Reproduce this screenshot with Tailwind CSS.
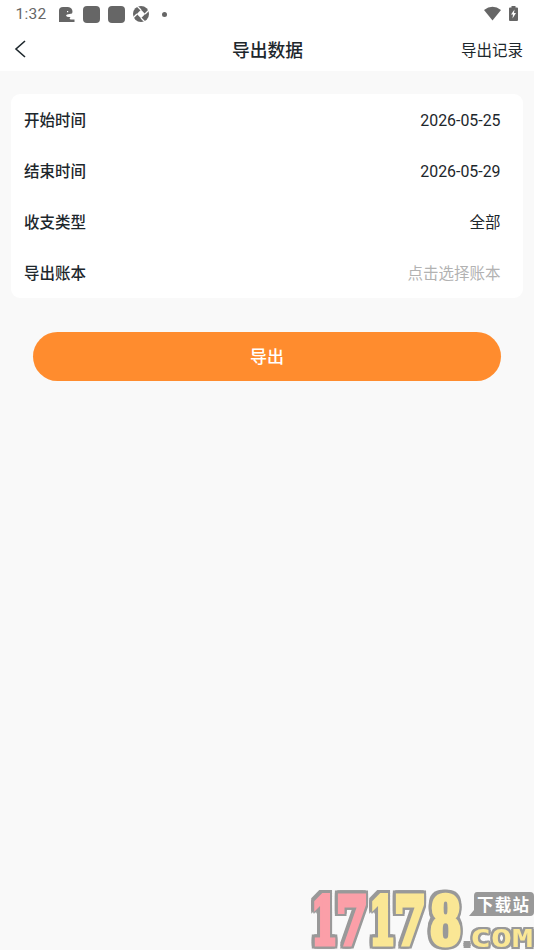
<!DOCTYPE html>
<html lang="zh-CN">
<head>
<meta charset="utf-8">
<title>导出数据</title>
<script src="https://cdn.jsdelivr.net/npm/@tailwindcss/browser@4"></script>
</head>
<body class="relative flex h-[950px] w-[534px] flex-col overflow-hidden bg-[#f9f9f9] font-['Roboto','Noto_Sans_CJK_SC',sans-serif] text-[#1d272c]">
  <header class="h-[71px] bg-white">
    <div class="flex h-7 items-center justify-between pr-[16px] pl-[15.5px] text-[#666]">
      <div class="flex items-center">
        <span class="w-[42px] text-[15.5px] leading-7 tracking-[0.3px]">1:32</span>
        <svg class="h-4 w-[17px]" viewBox="0 0 17 16" fill="currentColor"><path d="M1 16V4.500Q1 1 5 1H10Q14.500 1.500 14.500 6L14 7.500L9 8.500L8 9.500Q8.500 11 11 11H12.500L11.500 12.500L12.500 13.500H16.500V16ZM9 5V6.200H10.200V5Z" fill-rule="evenodd"/></svg>
        <span class="ml-2 size-[17px] rounded-[4px] bg-current"></span>
        <span class="ml-[8px] size-[17px] rounded-[4px] bg-current"></span>
        <svg class="ml-[8px] size-4" viewBox="0 0 16 16"><circle cx="8" cy="8" r="8" fill="#666"/><path d="M8 3.800L12.200 8L8 12.200L3.800 8Z" fill="#fff"/><path d="M8 4L4 0M12 8L16 4M8 12L12 16M4 8L0 12" stroke="#fff" stroke-width="1.300"/></svg>
        <span class="ml-[13.500px] size-[5px] rounded-full bg-current"></span>
      </div>
      <div class="flex -translate-y-px items-center gap-[8px]">
        <svg class="h-[15px] w-[17px]" viewBox="0 0 17 15" fill="currentColor"><path d="M0 4Q8.500-2.500 17 4L8.500 14.500Z"/></svg>
        <svg class="h-[15px] w-[9px]" viewBox="0 0 9 15"><path d="M2.500 0H6.500V1.500H8Q9 1.500 9 2.500V14Q9 15 8 15H1Q0 15 0 14V2.500Q0 1.500 1 1.500H2.500Z" fill="#666"/><path d="M5.500 3.500L2 8.500H4L3.500 12.500L7 7H5Z" fill="#fff"/></svg>
      </div>
    </div>
    <div class="flex h-[43px] items-center pr-[11px] pl-[14px]">
      <svg class="mb-px h-[18px] w-3" viewBox="0 0 12 18" fill="none" stroke="#1d272c" stroke-width="1.600"><path d="M11 1L2 9L11 17"/></svg>
      <h1 class="ml-[206px] pt-[2px] text-[17.800px] leading-[41px] font-medium">导出数据</h1>
      <a class="ml-auto pt-[3px] text-[15.500px] leading-[40px]">导出记录</a>
    </div>
  </header>
  <main>
    <section class="mx-[11px] mt-[23px] grid h-[204px] grid-rows-4 rounded-[9px] bg-white pr-[22.500px] pl-[13px] text-[15.500px]">
      <div class="flex items-center justify-between pt-[3px]"><span class="pt-[2px] font-medium">开始时间</span><span class="text-[15.900px]">2026-05-25</span></div>
      <div class="flex items-center justify-between pt-[3px]"><span class="pt-[2px] font-medium">结束时间</span><span class="text-[15.900px]">2026-05-29</span></div>
      <div class="flex items-center justify-between pt-[5px]"><span class="font-medium">收支类型</span><span>全部</span></div>
      <div class="flex items-center justify-between pt-[5px]"><span class="font-medium">导出账本</span><span class="text-[#b2b2b2]">点击选择账本</span></div>
    </section>
    <button class="mx-[33px] mt-[34px] flex h-[49px] w-[468px] items-center justify-center rounded-full bg-[#ff8c2e] pt-[2px] text-[17px] font-medium text-white">导出</button>
  </main>
  <svg class="absolute right-0 bottom-0 h-[64px] w-[230px]" viewBox="304 886 230 64" font-weight="bold">
    <g class="[filter:drop-shadow(2.500px_0_0_#999)_drop-shadow(-2.500px_0_0_#999)_drop-shadow(0_2.500px_0_#999)_drop-shadow(0_-2.500px_0_#999)]" font-family="DejaVu Serif, serif" font-size="66" stroke-width="5" stroke-linejoin="miter">
      <g fill="#fb9fa8" stroke="#fb9fa8">
        <text transform="translate(311 944) scale(.58 1)">1</text>
        <text transform="translate(336 944) scale(.7 1)">7</text>
      </g>
      <g fill="#fae795" stroke="#fae795">
        <text transform="translate(369 944) scale(.58 1)">1</text>
        <text transform="translate(394 944) scale(.7 1)">7</text>
        <text transform="translate(430 944) scale(.68 1)">8</text>
      </g>
    </g>
    <path d="M477 892H530Q534 892 534 896V912Q534 916 530 916H469L474 910V896Q474 892 477 892Z" fill="#999"/>
    <text x="477" y="910.500" font-family="Noto Sans CJK SC, sans-serif" font-size="16.500" textLength="52" fill="#fff">下载站</text>
    <g class="[filter:drop-shadow(2px_0_0_#999)_drop-shadow(-2px_0_0_#999)_drop-shadow(0_2px_0_#999)_drop-shadow(0_-2px_0_#999)]" font-family="DejaVu Sans Mono, monospace" font-size="25.500" fill="#fae795">
      <text x="464" y="946" fill="#999" font-size="16" font-family="DejaVu Sans, sans-serif">.</text>
      <text x="470" y="946.500" textLength="63" lengthAdjust="spacingAndGlyphs">COM</text>
    </g>
  </svg>
</body>
</html>
